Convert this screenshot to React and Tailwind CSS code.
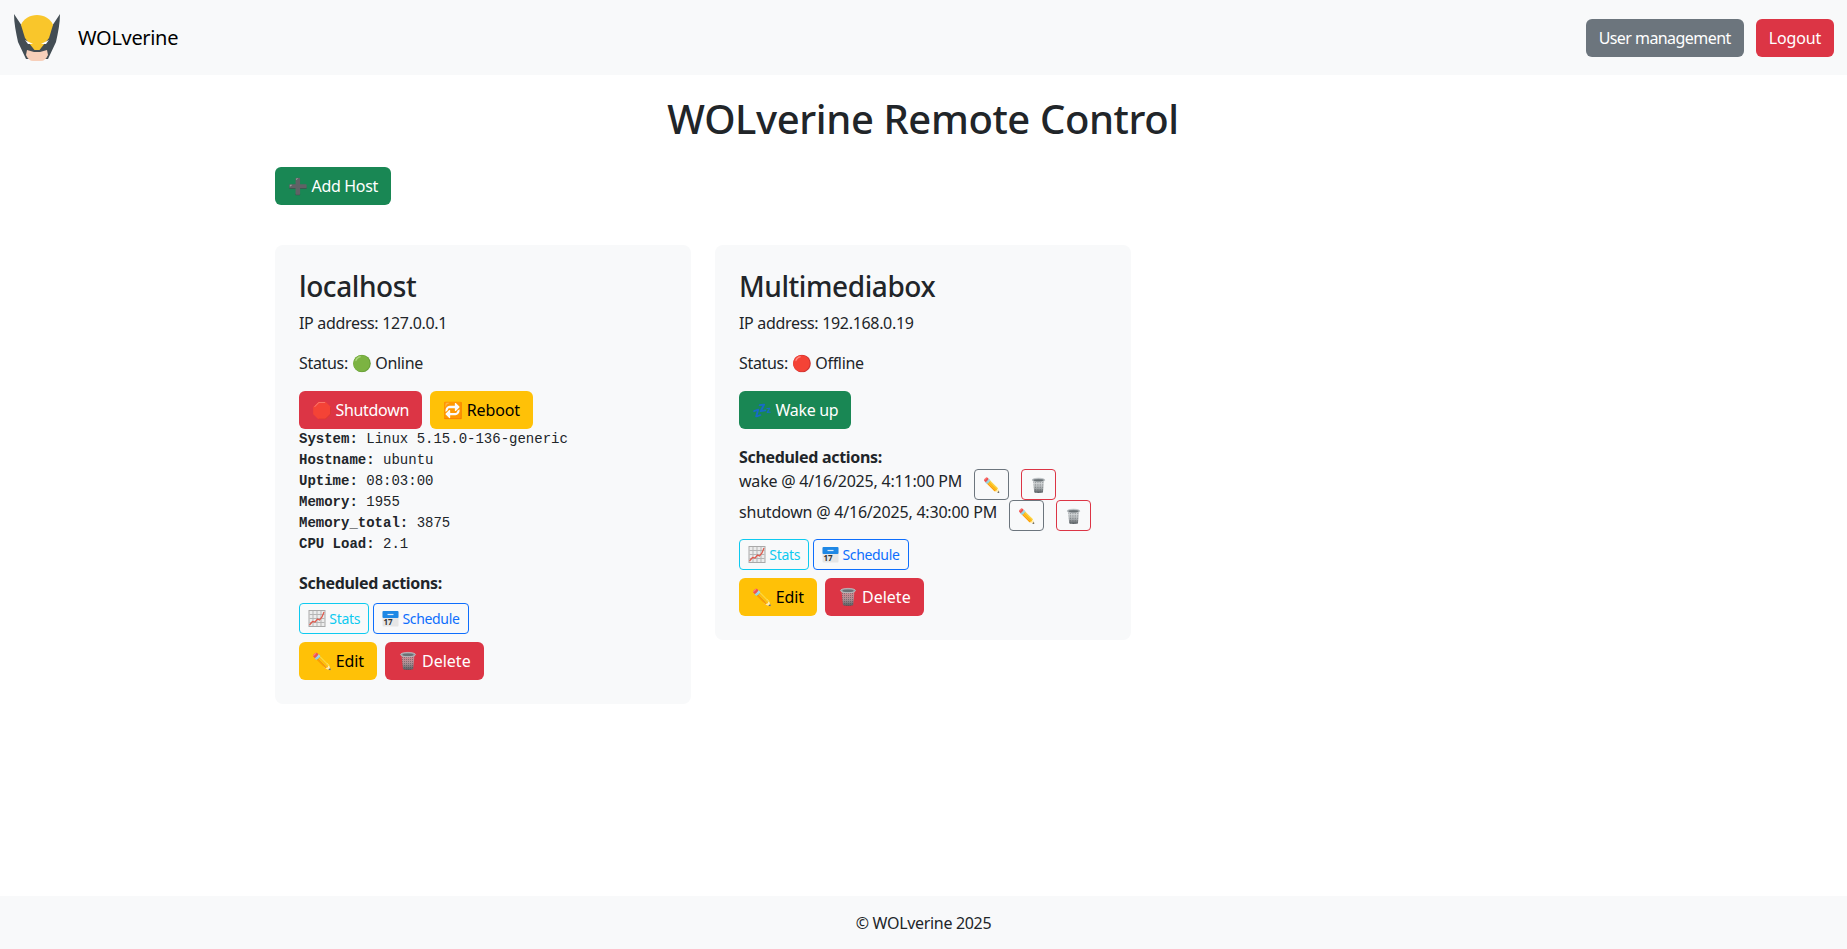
const sans = "font-['Noto_Sans','Open_Sans',sans-serif]";

function Btn({ color, children }) {
  return (
    <button className={`h-[38px] px-[13px] rounded-md text-base leading-6 whitespace-nowrap ${color}`}>
      {children}
    </button>
  );
}

function SmallBtn({ color, children }) {
  return (
    <button className={`h-[31px] px-2 rounded border text-sm leading-5 whitespace-nowrap bg-transparent ${color}`}>
      {children}
    </button>
  );
}

function Logo() {
  return (
    <svg width="48" height="50" viewBox="0 0 48 50" className="shrink-0">
      <path d="M1 1 L9 13 L39 13 L47 1 C47 10 45 20 43 29 L35 46 L13 46 L5 29 C3 20 1 10 1 1 Z" fill="#434d54" />
      <path d="M8 12 C10 6 17 2 24 2 C31 2 38 6 40 12 L36 25 L26.5 37 L21.5 37 L12 25 Z" fill="#f9c62b" />
      <path d="M12 27 L20 31 L15 31 Z M36 27 L28 31 L33 31 Z" fill="#ffffff" />
      <path d="M14 37 L21 39 L27 39 L34 37 L35 42 C33 46 31 48 28 48 L20 48 C17 48 15 46 13 42 Z" fill="#f7cfba" />
    </svg>
  );
}

// small drawn versions of the emoji faces used on the buttons
function ChartIcon() {
  return (
    <svg width="18" height="17" viewBox="0 0 17 17" className="inline-block align-[-3px]">
      <rect x="0.5" y="0.5" width="16" height="16" fill="#ececec" stroke="#a9a9a9" />
      <path d="M4.5 1V16M8.5 1V16M12.5 1V16M1 4.5H16M1 8.5H16M1 12.5H16" stroke="#b5b5b5" strokeWidth="1" />
      <path d="M1 15 L4 11.5 L6.5 12 L9 9 L11 10 L13.5 7 L15.5 2" fill="none" stroke="#e0584c" strokeWidth="1.2" />
    </svg>
  );
}

function CalendarIcon() {
  return (
    <svg width="17" height="17" viewBox="0 0 17 17" className="inline-block align-[-3px]">
      <rect x="0.5" y="1" width="16" height="15.5" rx="1" fill="#e6e6e6" />
      <rect x="0.5" y="1" width="16" height="7" rx="1" fill="#1e88e5" />
      <path d="M5.5 4.5H11.5" stroke="#d7ebfb" strokeWidth="1.2" />
      <text x="6" y="15" fontSize="8" fontWeight="700" textAnchor="middle" fill="#333" letterSpacing="0">17</text>
    </svg>
  );
}

function TrashIcon({ size = 20 }) {
  const id = `mesh${size}`;
  return (
    <svg width={size} height={size} viewBox="0 0 20 20" className="inline-block align-[-4px]">
      <defs>
        <pattern id={id} width="2" height="2" patternUnits="userSpaceOnUse">
          <rect width="1" height="1" fill="#3f4549" fillOpacity="0.45" />
        </pattern>
        <linearGradient id={`${id}b`} x1="0" y1="0" x2="0" y2="1">
          <stop offset="0" stopColor="#c9cdcf" stopOpacity="0.5" />
          <stop offset="0.55" stopColor="#a2a7aa" stopOpacity="0.8" />
          <stop offset="1" stopColor="#555b5f" />
        </linearGradient>
      </defs>
      <path d="M3.5 4 L5 18 C5.2 19 15 19 15.2 18 L16.5 4 Z" fill={`url(#${id}b)`} />
      <path d="M3.5 4 L5 18 C5.2 19 15 19 15.2 18 L16.5 4 Z" fill={`url(#${id})`} />
      <ellipse cx="10" cy="3.6" rx="7.5" ry="2.2" fill="#9aa1a5" stroke="#bcc1c4" strokeWidth="0.8" />
      <ellipse cx="10" cy="3.8" rx="5.6" ry="1.2" fill="#6a7175" />
    </svg>
  );
}

function Mono({ label, value }) {
  return (
    <div className="h-[21px] leading-[21px]">
      <b className="font-bold">{label}:</b> {value}
    </div>
  );
}

function Actions() {
  return (
    <>
      <div className="flex gap-1 mt-2">
        <SmallBtn color="border-[#0dcaf0] text-[#0dcaf0]"><ChartIcon /> Stats</SmallBtn>
        <SmallBtn color="border-[#0d6efd] text-[#0d6efd]"><CalendarIcon /> Schedule</SmallBtn>
      </div>
      <div className="flex gap-2 mt-2">
        <Btn color="bg-[#ffc107] text-black tracking-[-0.01em]">✏️ Edit</Btn>
        <Btn color="bg-[#dc3545] text-white tracking-normal"><TrashIcon /> Delete</Btn>
      </div>
    </>
  );
}

function Scheduled({ text }) {
  return (
    <div className="flex h-[31px]">
      <span className="leading-6 mr-3 tracking-[-0.013em]">{text}</span>
      <SmallBtn color="border-[#6c757d] w-[35px] px-0">✏️</SmallBtn>
      <span className="w-3" />
      <SmallBtn color="border-[#dc3545] w-[35px] px-0"><TrashIcon size={17} /></SmallBtn>
    </div>
  );
}

function Card({ children, name, ip, status }) {
  return (
    <div className="bg-[#f8f9fa] rounded-lg p-6">
      <h3 className="text-[28px] leading-[34px] font-medium tracking-[-0.015em] mb-2">{name}</h3>
      <p className="leading-6 mb-4">IP address: {ip}</p>
      <p className="leading-6 mb-4">Status: {status}</p>
      {children}
    </div>
  );
}

export default function App() {
  return (
    <div className={`min-h-screen flex flex-col bg-white text-[#212529] text-base tracking-[-0.02em] ${sans}`}>
      {/* NAVBAR */}
      <nav className="h-[75px] bg-[#f8f9fa] flex items-center justify-between pl-[13px] pr-[13px]">
        <div className="flex items-center gap-[17px]">
          <Logo />
          <span className="text-xl text-black">WOLverine</span>
        </div>
        <div className="flex gap-3">
          <Btn color="bg-[#6c757d] text-white tracking-[-0.035em]">User management</Btn>
          <Btn color="bg-[#dc3545] text-white tracking-[-0.01em]">Logout</Btn>
        </div>
      </nav>

      {/* MAIN */}
      <main className="flex-1 w-[1320px] ml-[263px] px-3 pt-5">
        <h1 className="text-[40px] leading-[48px] font-medium tracking-[-0.01em] text-center">WOLverine Remote Control</h1>
        <div className="mt-6">
          <Btn color="bg-[#198754] text-white tracking-[-0.02em]">➕ Add Host</Btn>
        </div>

        <div className="grid grid-cols-3 gap-6 mt-10 items-start">
          <Card name="localhost" ip="127.0.0.1" status="🟢 Online">
            <div className="flex gap-2">
              <Btn color="bg-[#dc3545] text-white">🛑 Shutdown</Btn>
              <Btn color="bg-[#ffc107] text-black tracking-[-0.01em]">🔁 Reboot</Btn>
            </div>
            <div className="font-['Liberation_Mono',monospace] text-sm tracking-normal">
              <Mono label="System" value="Linux 5.15.0-136-generic" />
              <Mono label="Hostname" value="ubuntu" />
              <Mono label="Uptime" value="08:03:00" />
              <Mono label="Memory" value="1955" />
              <Mono label="Memory_total" value="3875" />
              <Mono label="CPU Load" value="2.1" />
            </div>
            <p className="font-bold leading-6 mt-4">Scheduled actions:</p>
            <Actions />
          </Card>

          <Card name="Multimediabox" ip="192.168.0.19" status="🔴 Offline">
            <Btn color="bg-[#198754] text-white">💤 Wake up</Btn>
            <p className="font-bold leading-6 mt-4">Scheduled actions:</p>
            <Scheduled text="wake @ 4/16/2025, 4:11:00 PM" />
            <Scheduled text="shutdown @ 4/16/2025, 4:30:00 PM" />
            <Actions />
          </Card>
        </div>
      </main>

      {/* FOOTER */}
      <footer className="h-[53px] bg-[#f8f9fa] flex items-center justify-center pt-px">© WOLverine 2025</footer>
    </div>
  );
}
